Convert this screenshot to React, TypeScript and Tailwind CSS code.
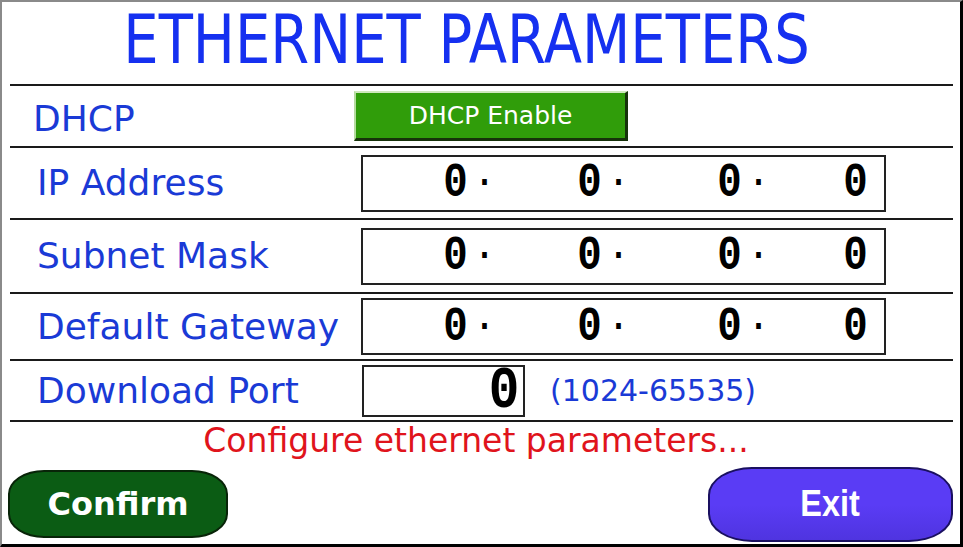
const labelFont = { fontFamily: '"DejaVu Sans", Verdana, sans-serif' }
const digitFont = { fontFamily: '"Liberation Mono", "Courier New", monospace' }

// one octet of an address field: right-aligned digit, optional separator dot
function Octet({ width, value, dot }: { width: string; value: string; dot: boolean }) {
  return (
    <div className={`flex h-full items-center justify-end ${width}`}>
      <span className="inline-block scale-x-[0.85] text-[48px] leading-none font-bold text-black" style={digitFont}>
        {value}
      </span>
      {dot && (
        <span className="inline-block w-[29px] text-center text-[40px] leading-none font-normal text-black" style={digitFont}>
          ·
        </span>
      )}
    </div>
  )
}

function AddressBox() {
  return (
    <div className="flex h-[57px] w-[525px] items-center border-2 border-[#222]">
      <Octet width="w-[136px]" value="0" dot />
      <Octet width="w-[134px]" value="0" dot />
      <Octet width="w-[140px]" value="0" dot />
      <div className="flex h-full w-[111px] items-center justify-end pr-[14px]">
        <span className="inline-block scale-x-[0.85] text-[48px] leading-none font-bold text-black" style={digitFont}>
          0
        </span>
      </div>
    </div>
  )
}

function Row({
  label,
  labelWidth,
  height,
  children,
  labelClass = '',
}: {
  label: string
  labelWidth: string
  height: string
  children: React.ReactNode
  labelClass?: string
}) {
  return (
    <div className={`flex items-center border-b-2 border-[#1a1a1a] ${height}`}>
      <div className={`shrink-0 ${labelWidth} ${labelClass}`}>
        <span className="text-[36px] leading-none text-[#1a3ad6]" style={labelFont}>
          {label}
        </span>
      </div>
      {children}
    </div>
  )
}

export default function App() {
  return (
    <div className="flex h-[547px] w-[963px] flex-col overflow-hidden border-t-2 border-r-[3px] border-b-[3px] border-l-2 border-t-[#8a8a8a] border-r-black border-b-black border-l-[#8a8a8a] bg-white">
      <div className="ml-[8px] flex w-[943px] flex-col">
        {/* header */}
        <div className="flex h-[84px] items-center justify-center border-b-2 border-[#1a1a1a] pr-[30px] pb-[6px]">
          <h1
            className="scale-y-[1.2] text-[56px] leading-none font-normal whitespace-nowrap text-[#1530f0]"
            style={labelFont}
          >
            ETHERNET PARAMETERS
          </h1>
        </div>

        <Row label="DHCP" labelWidth="w-[344px]" labelClass="pl-[23px] pt-[5px]" height="h-[62px]">
          <button className="flex h-[50px] w-[274px] items-center justify-center border-t-2 border-r-[3px] border-b-[3px] border-l-2 border-t-[#cfe9bd] border-r-[#16320a] border-b-[#16320a] border-l-[#b5dba0] bg-[#309d0a]">
            <span className="text-[25px] leading-none text-white" style={labelFont}>
              DHCP Enable
            </span>
          </button>
        </Row>

        <Row label="IP Address" labelWidth="w-[351px]" labelClass="pl-[27px]" height="h-[72px]">
          <AddressBox />
        </Row>

        <Row label="Subnet Mask" labelWidth="w-[351px]" labelClass="pl-[27px]" height="h-[74px]">
          <AddressBox />
        </Row>

        <Row label="Default Gateway" labelWidth="w-[351px]" labelClass="pl-[27px]" height="h-[67px]">
          <AddressBox />
        </Row>

        <Row label="Download Port" labelWidth="w-[352px]" labelClass="pl-[27px]" height="h-[61px]">
          <div className="flex h-[52px] w-[163px] items-center justify-end border-2 border-[#222] pr-[1px]">
            <span className="inline-block scale-x-[0.85] text-[60px] leading-none font-bold text-black" style={digitFont}>
              0
            </span>
          </div>
          <span className="ml-[25px] text-[30px] leading-none text-[#1a3ad6]" style={labelFont}>
            (1024-65535)
          </span>
        </Row>
      </div>

      {/* status line */}
      <div className="flex h-[42px] items-center justify-center pr-[10px] pb-[6px]">
        <span className="text-[33px] leading-none text-[#e0141c]" style={labelFont}>
          Configure ethernet parameters...
        </span>
      </div>

      {/* actions */}
      <div className="flex flex-1 items-center justify-between pr-[7px] pl-[6px]">
        <button className="flex h-[68px] w-[220px] items-center justify-center rounded-[36px/24px] border-2 border-[#082408] bg-[#0b5c14]">
          <span className="text-[32px] leading-none font-bold text-white" style={labelFont}>
            Confirm
          </span>
        </button>
        <button className="flex h-[75px] w-[245px] items-center justify-center rounded-[44px/28px] border-2 border-[#1a1060] bg-gradient-to-b from-[#5a3cf5] via-[#5a3cf5] to-[#4f34e0]">
          <span
            className="scale-x-[0.9] text-[36px] leading-none font-bold text-white"
            style={{ fontFamily: '"Liberation Sans", Arial, sans-serif' }}
          >
            Exit
          </span>
        </button>
      </div>
    </div>
  )
}
